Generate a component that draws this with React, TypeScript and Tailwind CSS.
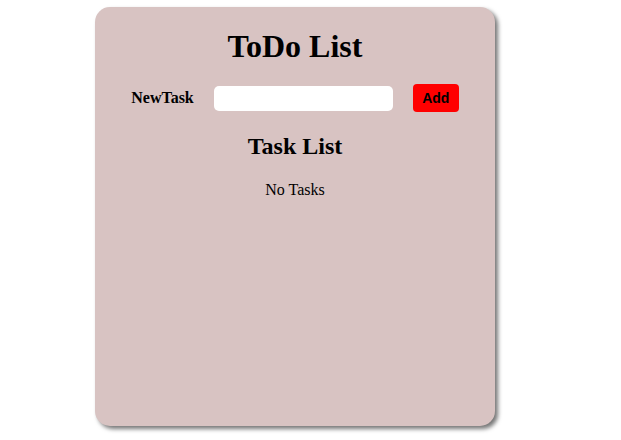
export default function App() {
  return (
    <div className="min-h-screen bg-white pt-[7px] pl-[95px]" style={{ fontFamily: '"Liberation Serif", "Times New Roman", serif' }}>
      <div className="w-[400px] h-[419px] rounded-[15px] bg-[#d8c3c2] shadow-[3px_3px_4px_#777] flex flex-col items-center pt-[21px] text-black">
        <h1 className="text-[32px] leading-[37px] font-bold">ToDo List</h1>

        {/* Input row */}
        <div className="mt-[19px] flex items-center h-[28px]">
          <label className="text-[16px] font-bold leading-[18px]">NewTask</label>
          <input
            type="text"
            className="ml-[20px] w-[179px] h-[25px] rounded-[5px] bg-white outline-none border-0 px-2"
          />
          <button
            className="ml-[20px] w-[46px] h-[28px] rounded-[4px] bg-[#ff0000] text-[14px] font-bold"
            style={{ fontFamily: '"Liberation Sans", Arial, sans-serif' }}
          >
            Add
          </button>
        </div>

        <h2 className="mt-[20px] text-[24px] leading-[28px] font-bold">Task List</h2>
        <p className="mt-[21px] text-[16px] leading-[18px]">No Tasks</p>
      </div>
    </div>
  )
}
